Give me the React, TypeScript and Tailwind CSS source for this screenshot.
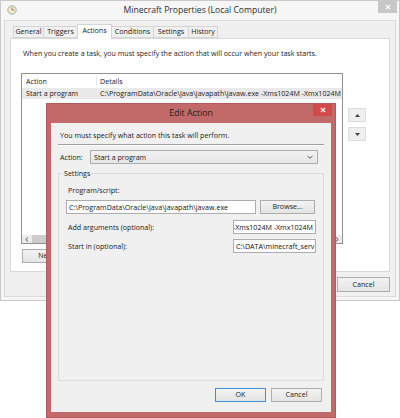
import React from "react";

const btn =
  "flex h-[14px] items-center justify-center border bg-linear-to-b from-[#f3f3f3] to-[#e4e4e4] text-[7.1px] leading-none text-[#1a1a1a]";

const tabs: { label: string; w: number; active?: boolean }[] = [
  { label: "General", w: 31 },
  { label: "Triggers", w: 35 },
  { label: "Actions", w: 35, active: true },
  { label: "Conditions", w: 43 },
  { label: "Settings", w: 36 },
  { label: "History", w: 30 },
];

const ClockIcon = () => (
  <svg width="10" height="10" viewBox="0 0 10 10">
    <circle cx="5" cy="5" r="4.2" fill="#f3e8c4" stroke="#9c9c9c" strokeWidth="0.8" />
    <path d="M5 2.4V5h2.1" fill="none" stroke="#707070" strokeWidth="0.8" />
  </svg>
);

const CloseX = () => (
  <svg width="6" height="6" viewBox="0 0 6 6">
    <path d="M0.8 0.8l4.4 4.4M5.2 0.8l-4.4 4.4" stroke="#fff" strokeWidth="1.2" />
  </svg>
);

const Chevron = ({ dir }: { dir: "left" | "right" | "down" }) => {
  const d = dir === "left" ? "M3 0.5L0.8 2.5 3 4.5" : dir === "right" ? "M1 0.5l2.2 2-2.2 2" : "M0.5 1l2.5 2.2L5.5 1";
  const w = dir === "down" ? 6 : 4;
  return (
    <svg width={w} height="5" viewBox={`0 0 ${w} 5`}>
      <path d={d} fill="none" stroke="#444" strokeWidth="0.9" />
    </svg>
  );
};

const Triangle = ({ up }: { up?: boolean }) => (
  <svg width="5" height="3" viewBox="0 0 5 3">
    <path d={up ? "M2.5 0L5 3H0z" : "M0 0h5L2.5 3z"} fill="#444" />
  </svg>
);

const TextBox = ({ value, className = "", alignEnd = false }: { value: string; className?: string; alignEnd?: boolean }) => (
  <div
    className={
      "flex h-[14px] items-center overflow-hidden whitespace-nowrap border border-[#abadb3] bg-white px-[2px] text-[7.1px] text-[#111] " +
      (alignEnd ? "justify-end " : "") +
      className
    }
  >
    <span className="shrink-0">{value}</span>
  </div>
);

const PropertiesWindow = () => (
  <div className="absolute left-0 top-0 flex h-[301px] w-[400px] flex-col border border-[#c9c9c9] bg-[#f6f6f6]">
    {/* title bar */}
    <div className="relative flex h-[19px] shrink-0 items-center justify-center">
      <div className="absolute left-[6px] top-[4px]">
        <ClockIcon />
      </div>
      <span className="text-[8.6px] text-[#2e2e2e]">Minecraft Properties (Local Computer)</span>
      <div className="absolute right-[2px] top-0 flex h-[12px] w-[19px] items-center justify-center bg-[#c7c7c7]">
        <CloseX />
      </div>
    </div>

    {/* client */}
    <div className="mx-[3px] mb-[3px] flex flex-1 flex-col border border-[#dadada] bg-[#f0f0f0] px-[5px]">
      <div className="flex h-[17px] items-end pl-[3px]">
        {tabs.map((t, i) => (
          <div
            key={t.label}
            style={{ width: t.w }}
            className={
              "flex items-center justify-center border border-[#d5d5d5] text-[7.1px] leading-none text-[#1a1a1a] " +
              (i > 0 ? "-ml-px " : "") +
              (t.active ? "relative z-10 mb-[-1px] h-[15px] border-b-0 bg-white pb-[2px]" : "h-[12px] bg-[#f0f0f0]")
            }
          >
            {t.label}
          </div>
        ))}
      </div>

      <div className="flex h-[234px] flex-col border border-[#d9d9d9] bg-white px-[10px] pt-[9px]">
        <p className="pl-[2px] text-[7.1px] leading-[10px] text-[#1a1a1a]">
          When you create a task, you must specify the action that will occur when your task starts.
        </p>

        <div className="mt-[15px] flex gap-[5px]">
          <div className="flex h-[171px] w-[322px] flex-col border border-[#8e939b] bg-white">
            <div className="flex h-[14px] items-center text-[7.1px] text-[#1a1a1a]">
              <div className="w-[75px] border-r border-[#eaeaea] pl-[4px]">Action</div>
              <div className="pl-[3px]">Details</div>
            </div>
            <div className="flex h-[11px] items-center overflow-hidden whitespace-nowrap bg-[#e9e9e9] text-[7.1px] text-[#1a1a1a]">
              <div className="w-[75px] shrink-0 pl-[4px]">Start a program</div>
              <div className="pl-[3px]">C:\ProgramData\Oracle\Java\javapath\javaw.exe -Xms1024M -Xmx1024M</div>
            </div>
            <div className="flex-1" />
            <div className="flex h-[8px] items-center bg-[#ececec]">
              <div className="flex w-[10px] justify-center">
                <Chevron dir="left" />
              </div>
              <div className="h-full w-[160px] bg-[#cdcdcd]" />
              <div className="flex-1" />
              <div className="flex w-[10px] justify-center">
                <Chevron dir="right" />
              </div>
            </div>
          </div>

          <div className="flex flex-col gap-[5px] pt-[35px]">
            <div className="flex h-[14px] w-[18px] items-center justify-center border border-[#dcdcdc] bg-[#efefef]">
              <Triangle up />
            </div>
            <div className="flex h-[14px] w-[18px] items-center justify-center border border-[#dcdcdc] bg-[#efefef]">
              <Triangle />
            </div>
          </div>
        </div>

        <div className="mt-[5px] flex gap-[5px] pl-px">
          <div className={btn + " w-[53px] border-[#adadad]"}>New...</div>
          <div className={btn + " w-[53px] border-[#adadad]"}>Edit...</div>
          <div className={btn + " w-[53px] border-[#adadad]"}>Delete</div>
        </div>
      </div>

      <div className="flex justify-end gap-[5px] pt-[5px]">
        <div className={btn + " h-[15px] w-[53px] border-[#adadad]"}>OK</div>
        <div className={btn + " h-[15px] w-[53px] border-[#adadad]"}>Cancel</div>
      </div>
    </div>
  </div>
);

const EditActionDialog = () => (
  <div className="absolute left-[46px] top-[103px] flex h-[315px] w-[290px] flex-col border border-[#b35a5a] bg-[#c26a6a]">
    <div className="relative flex h-[19px] shrink-0 items-center justify-center">
      <span className="text-[8.8px] text-[#1c1c1c]">Edit Action</span>
      <div className="absolute right-[3px] top-0 flex h-[12px] w-[19px] items-center justify-center bg-[#d24b4b]">
        <CloseX />
      </div>
    </div>

    <div className="mx-[4px] flex h-[289px] flex-col bg-[#f0f0f0] px-[7px] pt-[7px] text-[7.1px] text-[#1a1a1a]">
      <p className="pl-[2px] leading-[10px]">You must specify what action this task will perform.</p>
      <div className="mt-[4px] h-[2px] border-t border-b border-t-[#a0a0a0] border-b-white" />

      <div className="mt-[4px] flex items-center">
        <span className="w-[32px] pl-[2px]">Action:</span>
        <div className="flex h-[14px] w-[228px] items-center justify-between border border-[#acacac] bg-linear-to-b from-[#f2f2f2] to-[#e6e6e6] pl-[3px] pr-[4px]">
          <span>Start a program</span>
          <Chevron dir="down" />
        </div>
      </div>

      <div className="relative mt-[9px] flex h-[208px] flex-col border border-[#dcdcdc] pl-[7px] pr-[7px] pt-[11px]">
        <span className="absolute -top-[6px] left-[4px] bg-[#f0f0f0] px-[1px] leading-[10px]">Settings</span>
        <span className="pl-[2px] leading-[10px]">Program/script:</span>
        <div className="mt-[5px] flex gap-[4px]">
          <TextBox value="C:\ProgramData\Oracle\Java\javapath\javaw.exe" className="w-[190px]" />
          <div className={btn + " w-[55px] border-[#adadad]"}>Browse...</div>
        </div>
        <div className="mt-[6px] flex items-center justify-between">
          <span className="pl-[2px]">Add arguments (optional):</span>
          <TextBox value="-Xms1024M -Xmx1024M" className="w-[83px]" alignEnd />
        </div>
        <div className="mt-[5px] flex items-center justify-between">
          <span className="pl-[2px]">Start in (optional):</span>
          <TextBox value="C:\DATA\minecraft_serv" className="w-[83px]" />
        </div>
      </div>

      <div className="mt-[7px] flex justify-end gap-[5px] pr-[2px]">
        <div className={btn + " w-[51px] border-[#3c8fd8]"}>OK</div>
        <div className={btn + " w-[51px] border-[#adadad]"}>Cancel</div>
      </div>
    </div>
  </div>
);

export default function App() {
  return (
    <div className="relative h-[418px] w-[400px] overflow-hidden bg-white font-['Open_Sans',sans-serif]">
      <PropertiesWindow />
      <EditActionDialog />
    </div>
  );
}
